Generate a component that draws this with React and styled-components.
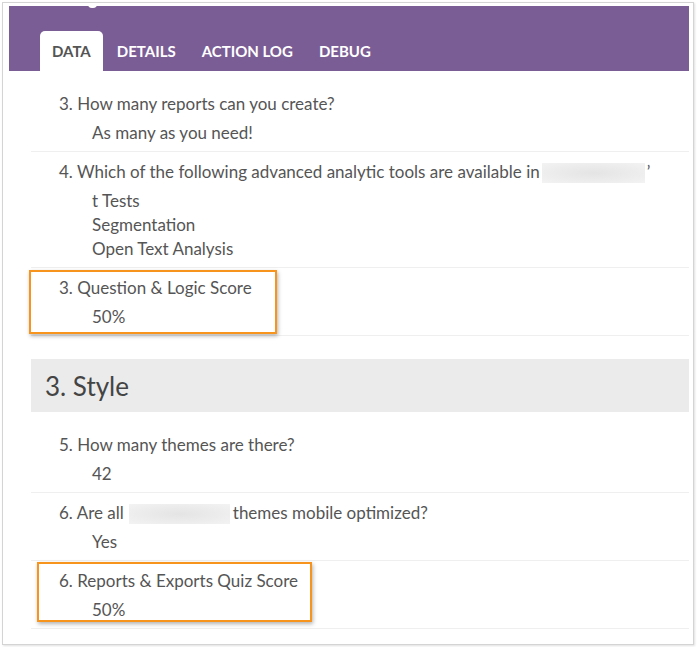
import React from "react";
import styled, { createGlobalStyle } from "styled-components";

const Global = createGlobalStyle`
  html, body { margin: 0; padding: 0; background: #fff; }
  body { font-family: Lato, "Open Sans", "Liberation Sans", sans-serif; color: #555; }
`;

const Frame = styled.div`
  box-sizing: border-box;
  width: 692px;
  height: 643px;
  margin: 2px;
  border: 1px solid #d4d4d4;
  box-shadow: 1px 1px 2px rgba(0, 0, 0, 0.12);
  padding: 3px 4px 0 6px;
  overflow: hidden;
`;

const Header = styled.div`
  position: relative;
  height: 65px;
  background: #7b5d95;
  display: flex;
  align-items: flex-end;
  padding-left: 31px;
  gap: 2px;
`;

const Notch = styled.span`
  position: absolute;
  top: -3px;
  left: 79px;
  width: 9px;
  height: 5px;
  background: #fff;
  border-radius: 0 0 4px 4px;
`;

const Tab = styled.div`
  height: 40px;
  padding: 0 12px;
  display: flex;
  align-items: center;
  box-sizing: border-box;
  font-size: 15px;
  font-weight: 700;
  text-transform: uppercase;
  border-radius: 5px 5px 0 0;
  color: ${(p) => (p.$active ? "#555" : "#fff")};
  background: ${(p) => (p.$active ? "#fff" : "transparent")};
`;

const Body = styled.div`
  padding: 0 0 14px 22px;
`;

const List = styled.div`
  padding-top: 13px;
`;

const Row = styled.div`
  position: relative;
  padding: 9px 0 6px 28px;
  border-bottom: 1px solid #efefef;
`;

const Question = styled.div`
  font-size: 17px;
  line-height: 22px;
  color: #555;
  white-space: nowrap;
`;

const Answers = styled.div`
  margin-top: 6px;
  padding-left: 33px;
`;

const Answer = styled.div`
  font-size: 17px;
  line-height: 24px;
  color: #555;
`;

const Blur = styled.span`
  display: inline-block;
  width: ${(p) => p.$w}px;
  height: 20px;
  vertical-align: middle;
  margin: -2px ${(p) => p.$mr || 0}px 0 ${(p) => p.$ml || 0}px;
  background: radial-gradient(ellipse at center, #e4e4e4 0%, #ececec 55%, #f3f3f3 100%);
`;

const Highlight = styled.div`
  position: absolute;
  box-sizing: border-box;
  top: ${(p) => p.$top}px;
  left: ${(p) => p.$left}px;
  width: ${(p) => p.$width}px;
  height: ${(p) => p.$height}px;
  border: 2px solid #f7941d;
  box-shadow: 1px 2px 4px rgba(0, 0, 0, 0.3);
  pointer-events: none;
`;

const SectionTitle = styled.div`
  margin-top: 23px;
  height: 53px;
  background: #ebebeb;
  display: flex;
  align-items: center;
  padding-left: 14px;
  font-size: 26px;
  color: #444;
`;

const Item = ({ q, answers, hl }) => (
  <Row>
    <Question>{q}</Question>
    <Answers>
      {answers.map((a) => (
        <Answer key={a}>{a}</Answer>
      ))}
    </Answers>
    {hl && <Highlight $top={hl[0]} $left={hl[1]} $width={hl[2]} $height={hl[3]} />}
  </Row>
);

export default function App() {
  return (
    <>
      <Global />
      <Frame>
        <Header>
          <Notch />
          <Tab $active>Data</Tab>
          <Tab>Details</Tab>
          <Tab>Action Log</Tab>
          <Tab>Debug</Tab>
        </Header>
        <Body>
          <List>
            <Item q="3. How many reports can you create?" answers={["As many as you need!"]} />
            <Item
              q={
                <>
                  4. Which of the following advanced analytic tools are available in
                  <Blur $w={103} $ml={2} $mr={2} />’
                </>
              }
              answers={["t Tests", "Segmentation", "Open Text Analysis"]}
            />
            <Item q="3. Question & Logic Score" answers={["50%"]} hl={[2, -2, 248, 64]} />
          </List>
          <SectionTitle>3. Style</SectionTitle>
          <List>
            <Item q="5. How many themes are there?" answers={["42"]} />
            <Item
              q={
                <>
                  6. Are all
                  <Blur $w={101} $ml={5} $mr={3} />
                  themes mobile optimized?
                </>
              }
              answers={["Yes"]}
            />
            <Item q="6. Reports & Exports Quiz Score" answers={["50%"]} hl={[1, 6, 275, 60]} />
          </List>
        </Body>
      </Frame>
    </>
  );
}
